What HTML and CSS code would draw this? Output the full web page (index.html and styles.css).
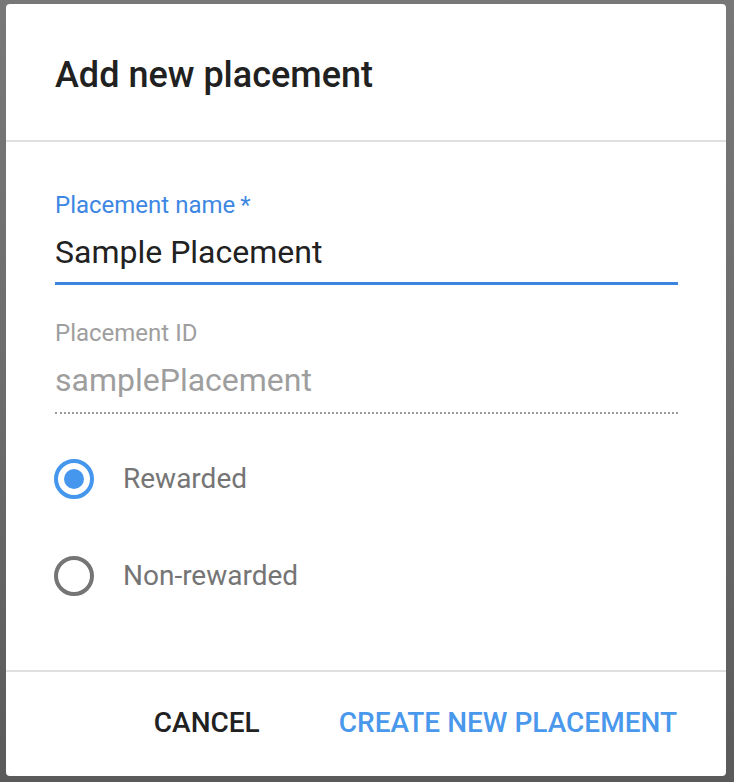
FILE: index.html
```html
<!DOCTYPE html>
<html lang="en">
<head>
<meta charset="utf-8">
<title>Add new placement</title>
<link rel="stylesheet" href="styles.css">
</head>
<body>
<div class="dialog">
  <div class="dialog-header">
    <h2 class="dialog-title">Add new placement</h2>
  </div>
  <div class="dialog-body">
    <div class="field field-focused">
      <label class="field-label">Placement name<span class="req">*</span></label>
      <div class="field-value">Sample Placement</div>
    </div>
    <div class="field field-disabled">
      <label class="field-label">Placement ID</label>
      <div class="field-value">samplePlacement</div>
    </div>
    <div class="radio-group">
      <div class="radio-row">
        <svg class="radio radio-on" width="40" height="40" viewBox="0 0 40 40"><circle cx="20" cy="20" r="18" fill="none" stroke="currentColor" stroke-width="4"/><circle cx="20" cy="20" r="10" fill="currentColor"/></svg>
        <span class="radio-label">Rewarded</span>
      </div>
      <div class="radio-row">
        <svg class="radio radio-off" width="40" height="40" viewBox="0 0 40 40"><circle cx="20" cy="20" r="18" fill="none" stroke="currentColor" stroke-width="4"/></svg>
        <span class="radio-label">Non-rewarded</span>
      </div>
    </div>
  </div>
  <div class="dialog-footer">
    <button class="btn btn-cancel">CANCEL</button>
    <button class="btn btn-primary">CREATE NEW PLACEMENT</button>
  </div>
</div>
</body>
</html>
```
FILE: styles.css
```css
html, body {
  margin: 0;
  padding: 0;
}
body {
  width: 734px;
  height: 782px;
  overflow: hidden;
  background: linear-gradient(to bottom, #787878 0%, #6c6c6c 50%, #5a5a5a 100%);
  font-family: Roboto, "Liberation Sans", Arial, sans-serif;
}
.dialog {
  box-sizing: border-box;
  width: 720px;
  height: 772px;
  margin: 4px 0 0 6px;
  background: #fff;
  border-radius: 4px;
  display: flex;
  flex-direction: column;
}
.dialog-header {
  height: 138px;
  box-sizing: border-box;
  padding: 53px 0 0 49px;
  border-bottom: 2px solid #e0e0e0;
}
.dialog-title {
  margin: 0;
  font-size: 36px;
  line-height: 36px;
  font-weight: 500;
  color: #212121;
}
.dialog-body {
  flex: 1;
  box-sizing: border-box;
  padding: 49px 48px 0 49px;
  border-bottom: 2px solid #e0e0e0;
}
.field {
  display: flex;
  flex-direction: column;
}
.field-label {
  font-size: 24px;
  line-height: 28px;
}
.req {
  margin-left: 5px;
}
.field-value {
  font-size: 32px;
  line-height: 40px;
}
.field-focused .field-label {
  color: #3d87e3;
}
.field-focused .field-value {
  margin-top: 13px;
  padding-bottom: 10px;
  color: #212121;
  border-bottom: 3px solid #3a85e0;
}
.field-disabled {
  margin-top: 34px;
}
.field-disabled .field-label,
.field-disabled .field-value {
  color: #9e9e9e;
}
.field-disabled .field-value {
  margin-top: 13px;
  padding-bottom: 12px;
  border-bottom: 2px dotted #9a9a9a;
}
.radio-group {
  margin-top: 45px;
  display: flex;
  flex-direction: column;
  gap: 57px;
}
.radio-row {
  display: flex;
  align-items: center;
  height: 40px;
  margin-left: -1px;
}
.radio {
  flex: none;
  display: block;
}
.radio-on {
  color: #4597ee;
}
.radio-off {
  color: #757575;
}
.radio-label {
  margin-left: 29px;
  font-size: 28px;
  line-height: 32px;
  color: #757575;
}
.dialog-footer {
  height: 104px;
  box-sizing: border-box;
  display: flex;
  justify-content: flex-end;
  align-items: flex-start;
  gap: 79px;
  padding: 35px 49px 0 0;
}
.btn {
  border: 0;
  background: none;
  padding: 0;
  margin: 0;
  font-family: inherit;
  font-size: 28px;
  line-height: 32px;
  font-weight: 500;
  cursor: pointer;
}
.btn-cancel {
  color: #212121;
}
.btn-primary {
  color: #4a98ec;
}
```
